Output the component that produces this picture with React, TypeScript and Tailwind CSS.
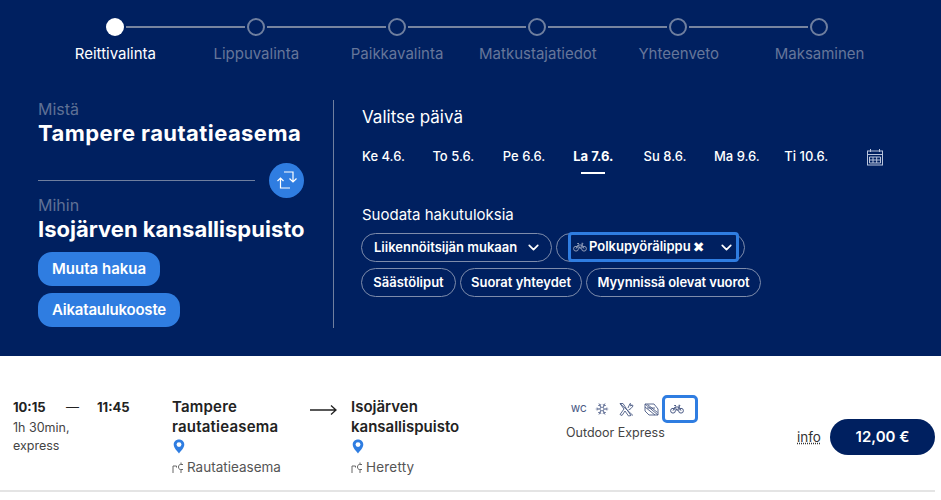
import React from "react";
import { ChevronDown, Snowflake } from "lucide-react";

const steps = ["Reittivalinta", "Lippuvalinta", "Paikkavalinta", "Matkustajatiedot", "Yhteenveto", "Maksaminen"];
const days = ["Ke 4.6.", "To 5.6.", "Pe 6.6.", "La 7.6.", "Su 8.6.", "Ma 9.6.", "Ti 10.6."];

function Pin() {
  return (
    <svg width="12" height="15" viewBox="0 0 12 15" className="block ml-[1px]">
      <path d="M6 .5C2.9.5.7 2.8.7 5.6c0 3.4 3.6 6.8 5.3 8.9 1.7-2.1 5.3-5.5 5.3-8.9C11.3 2.8 9.1.5 6 .5Z" fill="#2f7de1" />
      <circle cx="6" cy="5.6" r="2.4" fill="#fff" />
    </svg>
  );
}

function Seat() {
  return (
    <svg width="12" height="13" viewBox="0 0 12 13" fill="none" stroke="#666" strokeWidth="1" className="block shrink-0">
      <path d="M1 12V5h3.5v1.5" />
      <path d="M11 3.5H8.5C7.2 3.5 6.5 4.6 6.5 6s.7 2.5 2 2.5H11M9 1.5v2M9 8.5V12" />
    </svg>
  );
}

function BikeIcon({ color }: { color: string }) {
  return (
    <svg width="14" height="10" viewBox="0 0 14 10" fill="none" stroke={color} strokeWidth="1" className="block shrink-0">
      <circle cx="3" cy="6.7" r="2.4" />
      <circle cx="11" cy="6.7" r="2.4" />
      <path d="M3 6.7 5 3h4l2 3.700M5 3l2.200 3.700L9 3M4.200 1.500H6M8.500 1.300H10L9 3" />
    </svg>
  );
}

function Step({ active }: { active: boolean }) {
  return active ? (
    <span className="w-[18px] h-[18px] rounded-full bg-white shrink-0" />
  ) : (
    <span className="w-[18px] h-[18px] rounded-full border-2 border-[#6f7f9f] shrink-0" />
  );
}

export default function App() {
  return (
    <div className="w-[941px] h-[500px] overflow-hidden bg-white text-[#222] font-['Inter','Liberation_Sans',sans-serif]">
      <header className="h-[356px] bg-[#002060] text-white pt-[18px]">
        <div className="flex items-center w-[722px] ml-[106px] h-[18px]">
          {steps.map((s, i) => (
            <React.Fragment key={s}>
              <Step active={i === 0} />
              {i < 5 && <span className="flex-1 h-[2px] mx-[2px] bg-[#77849f]" />}
            </React.Fragment>
          ))}
        </div>
        <div className="grid grid-cols-6 w-[845px] ml-[45px] mt-[8px]">
          {steps.map((s, i) => (
            <div key={s} className={"text-center text-[15px] leading-[20px] " + (i === 0 ? "text-white" : "text-[#66769a]")}>
              {s}
            </div>
          ))}
        </div>

        <div className="flex mt-[36px] ml-[38px]">
          <div className="w-[267px] h-[228px]">
            <div className="text-[16px] leading-[18px] text-[#5f7095]">Mistä</div>
            <div className="text-[22px] leading-[30px] font-bold tracking-[0.43px] whitespace-nowrap">Tampere rautatieasema</div>
            <div className="flex items-center h-[36px] mt-[14px]">
              <div className="w-[217px] h-px bg-[#6f7f9f]" />
              <button className="ml-[14px] w-[35px] h-[35px] rounded-full bg-[#2f7de1] flex items-center justify-center">
                <svg width="20" height="20" viewBox="0 0 20 20" fill="none" stroke="#fff" strokeWidth="1.2">
                  <path d="M7 2h9v10M12.500 8.500 16 12l3.500-3.500" />
                  <path d="M13 18H3.500V8M0.500 11l3-3 3 3" />
                </svg>
              </button>
            </div>
            <div className="text-[16px] leading-[18px] text-[#5f7095] -mt-[2px]">Mihin</div>
            <div className="text-[22px] leading-[30px] font-bold whitespace-nowrap">Isojärven kansallispuisto</div>
            <div className="flex flex-col items-start gap-[7px] mt-[8px]">
              <button className="h-[34px] px-[14px] rounded-[14px] bg-[#2f7de1] text-[15px] font-semibold">Muuta hakua</button>
              <button className="h-[34px] w-[142px] rounded-[14px] bg-[#2f7de1] text-[15px] tracking-[-0.2px] font-semibold">Aikataulukooste</button>
            </div>
          </div>

          <div className="w-px h-[228px] bg-[#6f7f9f] ml-[28px]" />

          <div className="ml-[28px] flex-1">
            <div className="text-[17px] leading-[24px] mt-[5px]">Valitse päivä</div>
            <div className="flex items-start mt-[17px] h-[36px] text-[13px] leading-[20px]">
              {days.map((d, i) => (
                <div key={d} className="w-[70.4px] shrink-0">
                  <div className={"w-fit whitespace-nowrap " + (i === 3 ? "font-bold" : "font-medium")}>
                    {d}
                    {i === 3 && <div className="mx-auto mt-[6px] w-[24px] h-[2px] bg-white" />}
                  </div>
                </div>
              ))}
              <svg width="18" height="18" viewBox="0 0 18 18" fill="none" stroke="#b9c4dc" strokeWidth="1" className="ml-[11px] mt-[2px]">
                <rect x="1.500" y="3" width="15" height="14" />
                <path d="M1.500 6.500h15M4.500 1v3M13.500 1v3M3.500 9h11v6h-11zM3.500 12h11M7 9v6M10.700 9v6" />
              </svg>
            </div>
            <div className="text-[15px] leading-[20px] mt-[23px]">Suodata hakutuloksia</div>
            <div className="flex gap-[4px] mt-[8px] -ml-[1px] text-[13px] font-semibold">
              <button className="h-[29px] w-[191px] pl-[12px] pr-[9px] rounded-full border border-[#7e8cab] flex items-center justify-between whitespace-nowrap">
                Liikennöitsijän mukaan
                <ChevronDown size={17} strokeWidth={2.4} />
              </button>
              <button className="relative h-[29px] w-[189px] rounded-full border border-[#7e8cab]">
                <span className="absolute left-[11px] -top-[2px] w-[171px] h-[30px] bg-[#002060] border-[3px] border-[#2f7de1] rounded-[4px] flex items-center pl-[2px] pr-[1px] whitespace-nowrap">
                  <BikeIcon color="#8f9cb8" />
                  <span className="ml-[2px]">Polkupyörälippu</span>
                  <span className="ml-[2px] text-[14px] leading-[20px] font-['DejaVu_Sans',sans-serif]">✖</span>
                  <ChevronDown size={17} strokeWidth={2.4} className="ml-auto" />
                </span>
              </button>
            </div>
            <div className="flex gap-[4px] mt-[6px] -ml-[1px] text-[13px] font-semibold">
              <button className="h-[29px] w-[95px] rounded-full border border-[#7e8cab] whitespace-nowrap">Säästöliput</button>
              <button className="h-[29px] w-[122px] rounded-full border border-[#7e8cab] whitespace-nowrap">Suorat yhteydet</button>
              <button className="h-[29px] w-[175px] rounded-full border border-[#7e8cab] whitespace-nowrap tracking-[-0.1px]">Myynnissä olevat vuorot</button>
            </div>
          </div>
        </div>
      </header>

      <section className="flex w-[935px] h-[136px] border-b-2 border-[#e4e4e4] pt-[41px] text-[#333]">
        <div className="w-[172px] pl-[13px] shrink-0">
          <div className="flex text-[13px] font-bold leading-[20px] text-[#222]">
            <span className="w-[53px]">10:15</span>
            <span className="w-[31px] font-normal">—</span>
            <span>11:45</span>
          </div>
          <div className="text-[12.5px] leading-[18px] mt-[2px] text-[#444]">1h 30min,<br />express</div>
        </div>
        <div className="w-[138px] shrink-0">
          <div className="text-[15px] font-semibold leading-[20px] text-[#222] tracking-[0.2px]">Tampere<br />rautatieasema</div>
          <div className="mt-[2px]"><Pin /></div>
          <div className="flex items-center gap-[3px] text-[13.5px] leading-[18px] mt-[4px] text-[#555]"><Seat />Rautatieasema</div>
        </div>
        <div className="w-[41px] shrink-0 pt-[7px]">
          <svg width="27" height="12" viewBox="0 0 27 12" fill="none" stroke="#222" strokeWidth="1.3" className="block">
            <path d="M0 6h26M21 1.500 26 6l-5 4.500" />
          </svg>
        </div>
        <div className="w-[215px] shrink-0">
          <div className="text-[15px] font-semibold leading-[20px] text-[#222]">Isojärven<br />kansallispuisto</div>
          <div className="mt-[2px]"><Pin /></div>
          <div className="flex items-center gap-[3px] text-[13.5px] tracking-[0.2px] leading-[18px] mt-[4px] text-[#555]"><Seat />Heretty</div>
        </div>
        <div className="w-[231px] shrink-0 -mt-[2px]">
          <div className="flex items-center h-[28px] text-[#4a5a85]">
            <span className="ml-[5px] w-[24px] text-[9px] font-medium">WC</span>
            <Snowflake size={14} strokeWidth={1.3} />
            <svg width="15" height="15" viewBox="0 0 15 15" fill="none" stroke="currentColor" strokeWidth="0.9" className="ml-[10px]">
              <path d="M1 1.500h3l2 3 1.500 2.500L12 13.500 9.500 14 6 9 3 13.500 1 12.500l4-5.500zM1 1.500l13 12M9 6l2-4.500 1 .5-.5 2 2-1 .5 1-2 2.500L9.500 8" />
            </svg>
            <svg width="15" height="13" viewBox="0 0 15 13" fill="none" stroke="currentColor" strokeWidth="0.9" className="ml-[10px]">
              <path d="M1 1h9l4 5v6H5L1 8zM1 1l13 11M1 4l10 8M3.500 1.500l10 8M3 5h8" />
            </svg>
            <span className="ml-[3px] w-[36px] h-[28px] border-[3px] border-[#2f7de1] rounded-[5px] flex items-center pl-[5px]">
              <BikeIcon color="#4a5a85" />
            </span>
          </div>
          <div className="text-[12.5px] leading-[18px] text-[#444] mt-[1px]">Outdoor Express</div>
        </div>
        <div className="flex items-center h-[36px] mt-[22px]">
          <span className="w-[33px] text-[13.5px] text-[#333] underline decoration-dotted">info</span>
          <button className="w-[105px] h-[36px] rounded-full bg-[#002060] text-white text-[15px] font-semibold">12,00 €</button>
        </div>
      </section>
    </div>
  );
}
